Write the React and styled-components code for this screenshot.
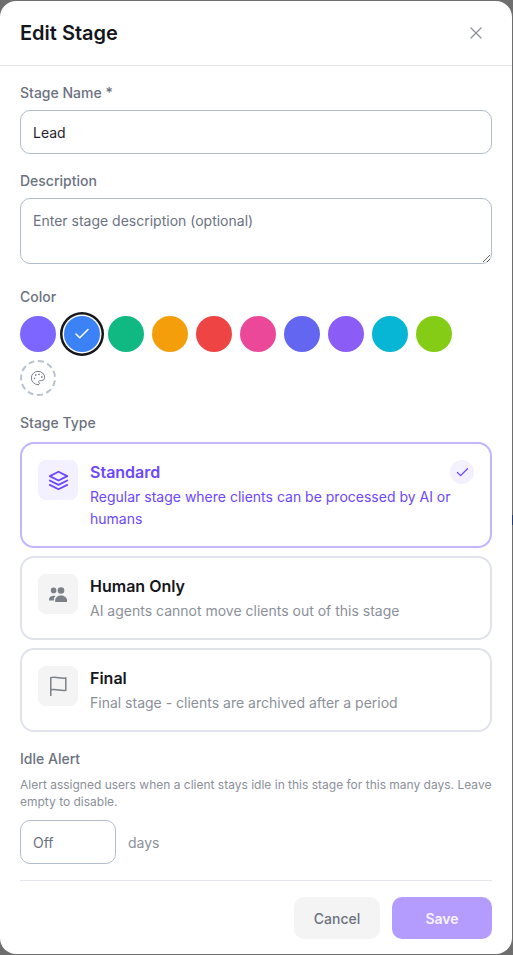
import React from "react";
import styled, { createGlobalStyle } from "styled-components";
import { Check, Palette, X } from "lucide-react";
import { FiLayers } from "react-icons/fi";

const swatches = [
  "#7c66ff",
  "#3b82f6",
  "#10b981",
  "#f59e0b",
  "#ef4444",
  "#ec4899",
  "#6366f1",
  "#8b5cf6",
  "#06b6d4",
  "#84cc16",
];

const PeopleIcon = () => (
  <svg width="20" height="20" viewBox="0 0 20 20" fill="currentColor">
    <circle cx="5.6" cy="6.4" r="2.8" />
    <circle cx="13" cy="6.5" r="3.3" />
    <path d="M1 16.5v-1.2c0-2.2 2.3-3.5 4.6-3.5.7 0 1.4.1 2 .3-1.1.9-1.7 2-1.7 3.2v1.2z" />
    <path d="M7.2 18v-2c0-2.7 3-4.5 5.8-4.5s6 1.8 6 4.5v2z" />
  </svg>
);

const FlagIcon = () => (
  <svg
    width="24"
    height="24"
    viewBox="0 0 24 24"
    fill="none"
    stroke="currentColor"
    strokeWidth="1.5"
  >
    <path d="M4.8 22V3.6c5-1.4 10 1.4 15 .4v12.2c-5 1-10-1.8-15-.4" />
  </svg>
);

const stageTypes = [
  {
    name: "Standard",
    text: "Regular stage where clients can be processed by AI or humans",
    icon: <FiLayers size={21} />,
    selected: true,
  },
  {
    name: "Human Only",
    text: "AI agents cannot move clients out of this stage",
    icon: <PeopleIcon />,
  },
  {
    name: "Final",
    text: "Final stage - clients are archived after a period",
    icon: <FlagIcon />,
  },
];

const App = () => {
  return (
    <Backdrop>
      <GlobalStyle />
      <Sliver />
      <Modal>
        <Header>
          <Title>Edit Stage</Title>
          <CloseButton>
            <X size={20} strokeWidth={1.5} />
          </CloseButton>
        </Header>
        <Body>
          <Field>
            <Label>Stage Name *</Label>
            <TextInput defaultValue="Lead" />
          </Field>
          <Field>
            <Label>Description</Label>
            <TextArea placeholder="Enter stage description (optional)" />
          </Field>
          <Field>
            <Label $gap={9}>Color</Label>
            <Swatches>
              {swatches.map((color, i) => (
                <Swatch key={i} $color={color} $active={i === 1}>
                  {i === 1 && <Check size={18} strokeWidth={2} />}
                </Swatch>
              ))}
              <CustomSwatch>
                <Palette size={16} strokeWidth={1.5} />
              </CustomSwatch>
            </Swatches>
          </Field>
          <Field>
            <Label $gap={9}>Stage Type</Label>
            <TypeList>
              {stageTypes.map((type) => (
                <TypeCard key={type.name} $selected={type.selected}>
                  <TypeIcon $selected={type.selected}>{type.icon}</TypeIcon>
                  <TypeInfo>
                    <TypeName $selected={type.selected}>{type.name}</TypeName>
                    <TypeText $selected={type.selected}>{type.text}</TypeText>
                  </TypeInfo>
                  {type.selected && (
                    <SelectedMark>
                      <Check size={15} strokeWidth={2} />
                    </SelectedMark>
                  )}
                </TypeCard>
              ))}
            </TypeList>
          </Field>
          <Field>
            <Label>Idle Alert</Label>
            <Help>
              Alert assigned users when a client stays idle in this stage for
              this many days. Leave empty to disable.
            </Help>
            <IdleRow>
              <DaysInput placeholder="Off" />
              <DaysLabel>days</DaysLabel>
            </IdleRow>
          </Field>
        </Body>
        <Footer>
          <CancelButton>Cancel</CancelButton>
          <SaveButton>Save</SaveButton>
        </Footer>
      </Modal>
    </Backdrop>
  );
};

export default App;

const GlobalStyle = createGlobalStyle`
  * {
    box-sizing: border-box;
  }
  html, body {
    margin: 0;
    padding: 0;
  }
  body {
    font-family: Inter, "Liberation Sans", sans-serif;
    background: #6e6e6e;
  }
`;

const Backdrop = styled.div`
  position: relative;
  width: 513px;
  height: 955px;
  padding: 1px 1px 1px 0;
  background: #6e6e6e;
  overflow: hidden;
`;

const Sliver = styled.div`
  position: absolute;
  top: 515px;
  right: 0;
  width: 1px;
  height: 10px;
  background: #1f3a7a;
`;

const Modal = styled.div`
  display: flex;
  flex-direction: column;
  height: 953px;
  background: #fff;
  border-radius: 16px;
`;

const Header = styled.div`
  display: flex;
  align-items: center;
  justify-content: space-between;
  height: 65px;
  padding: 0 26px 0 20px;
  border-bottom: 1px solid #e2e6ec;
`;

const Title = styled.h2`
  margin: 0;
  font-size: 20px;
  font-weight: 600;
  line-height: 28px;
  color: #14161c;
`;

const CloseButton = styled.button`
  display: flex;
  padding: 0;
  border: none;
  background: none;
  color: #8b9099;
`;

const Body = styled.div`
  display: flex;
  flex-direction: column;
  gap: 17px;
  padding: 17px 20px 16px;
`;

const Field = styled.div`
  display: flex;
  flex-direction: column;
`;

const Label = styled.label`
  margin-bottom: ${(p) => p.$gap || 7}px;
  font-size: 14px;
  font-weight: 500;
  line-height: 20px;
  color: #6b7280;
`;

const TextInput = styled.input`
  width: 100%;
  height: 44px;
  padding: 0 12px;
  border: 1px solid #b1bdcd;
  border-radius: 10px;
  outline: none;
  font: 400 14px Inter, sans-serif;
  color: #1f2430;
`;

const TextArea = styled.textarea`
  width: 100%;
  height: 66px;
  margin-bottom: 6px;
  padding: 12px;
  border: 1px solid #b1bdcd;
  border-radius: 10px;
  outline: none;
  font: 400 14px/20px Inter, sans-serif;
  &::placeholder {
    color: #6b7280;
  }
`;

const Swatches = styled.div`
  display: flex;
  flex-wrap: wrap;
  gap: 8px;
`;

const Swatch = styled.div`
  display: flex;
  align-items: center;
  justify-content: center;
  width: 36px;
  height: 36px;
  border-radius: 50%;
  background: ${(p) => p.$color};
  color: #fff;
  box-shadow: ${(p) =>
    p.$active ? "0 0 0 1.5px #fff, 0 0 0 4px #14161c" : "none"};
`;

const CustomSwatch = styled.div`
  display: flex;
  align-items: center;
  justify-content: center;
  width: 36px;
  height: 36px;
  border: 2px dashed #b9c3d0;
  border-radius: 50%;
  color: #7b8089;
`;

const TypeList = styled.div`
  display: flex;
  flex-direction: column;
  gap: 8px;
`;

const TypeCard = styled.div`
  position: relative;
  display: flex;
  gap: 12px;
  padding: 16px;
  border: 2px solid ${(p) => (p.$selected ? "#c4b5fd" : "#e0e4ea")};
  border-radius: 14px;
  background: #fff;
`;

const TypeIcon = styled.div`
  display: flex;
  flex: none;
  align-items: center;
  justify-content: center;
  width: 40px;
  height: 40px;
  border-radius: 8px;
  background: ${(p) => (p.$selected ? "#f3f0ff" : "#f4f4f5")};
  color: ${(p) => (p.$selected ? "#6c47ff" : "#7b8089")};
`;

const TypeInfo = styled.div`
  flex: 1;
  min-width: 0;
`;

const TypeName = styled.div`
  margin-bottom: 2px;
  font-size: 16px;
  font-weight: 600;
  line-height: 24px;
  color: ${(p) => (p.$selected ? "#6c47ff" : "#14161c")};
`;

const TypeText = styled.div`
  font-size: 14px;
  line-height: 22px;
  color: ${(p) => (p.$selected ? "#6c47ff" : "#8b9099")};
`;

const SelectedMark = styled.div`
  position: absolute;
  top: 16px;
  right: 16px;
  display: flex;
  align-items: center;
  justify-content: center;
  width: 24px;
  height: 24px;
  border-radius: 50%;
  background: #f3f0ff;
  color: #6c47ff;
`;

const Help = styled.p`
  margin: 0 0 10px;
  font-size: 12px;
  line-height: 17px;
  color: #8b9099;
`;

const IdleRow = styled.div`
  display: flex;
  align-items: center;
  gap: 12px;
`;

const DaysInput = styled(TextInput)`
  width: 96px;
  &::placeholder {
    color: #6b7280;
  }
`;

const DaysLabel = styled.span`
  font-size: 14px;
  color: #8b9099;
`;

const Footer = styled.div`
  display: flex;
  justify-content: flex-end;
  gap: 12px;
  margin: 0 20px;
  padding-top: 16px;
  border-top: 1px solid #e2e6ec;
`;

const CancelButton = styled.button`
  width: 86px;
  height: 42px;
  border: none;
  border-radius: 10px;
  background: #f4f4f5;
  font: 500 14px Inter, sans-serif;
  color: #6b7280;
`;

const SaveButton = styled.button`
  width: 100px;
  height: 42px;
  border: none;
  border-radius: 10px;
  background: #b49cff;
  font: 600 14px Inter, sans-serif;
  color: #f6f3ff;
`;
